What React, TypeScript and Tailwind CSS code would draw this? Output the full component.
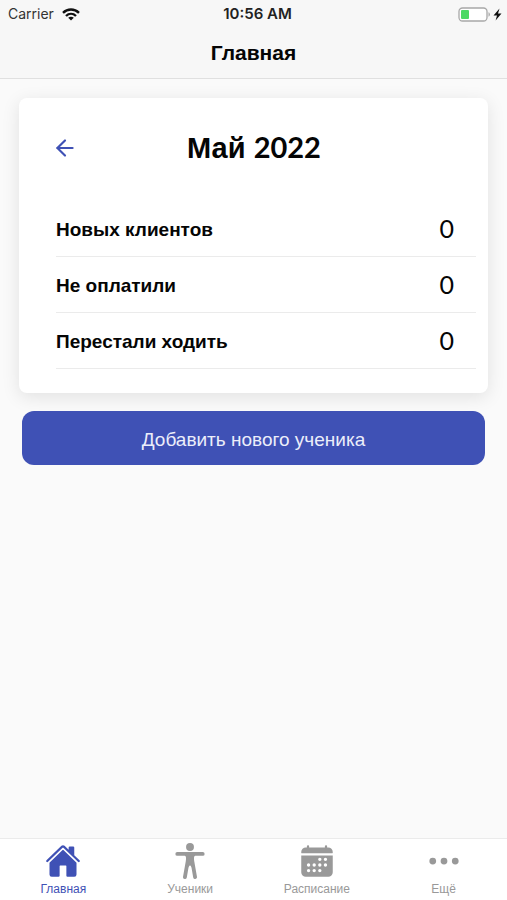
import React from 'react';
import { ArrowLeft } from 'lucide-react';
import { IoBody, IoCalendar, IoEllipsisHorizontal, IoHome } from 'react-icons/io5';

interface StatRowProps {
    label: string;
    value: number;
}

const stats: StatRowProps[] = [
    { label: 'Новых клиентов', value: 0 },
    { label: 'Не оплатили', value: 0 },
    { label: 'Перестали ходить', value: 0 },
];

const tabs = [
    { label: 'Главная', icon: IoHome, active: true },
    { label: 'Ученики', icon: IoBody, active: false },
    { label: 'Расписание', icon: IoCalendar, active: false },
    { label: 'Ещё', icon: IoEllipsisHorizontal, active: false },
];

const WifiIcon: React.FC = () => (
    <svg width="18" height="13" viewBox="0 0 18 13" fill="none" stroke="#111" strokeWidth="2.4" aria-hidden="true">
        <path d="M1 4.8C5.5.4 12.5.4 17 4.8" />
        <path d="M4 8C6.9 5.2 11.1 5.2 14 8" />
        <path d="M9 12.6L6.2 9.8C7.8 8.3 10.2 8.3 11.8 9.8Z" fill="#111" stroke="none" />
    </svg>
);

const BatteryIcon: React.FC = () => (
    <svg width="45" height="15" viewBox="0 0 45 15" aria-hidden="true">
        <rect x="1" y="1" width="28" height="13" rx="3.5" fill="#fff" stroke="#a8a8a8" strokeWidth="1.3" />
        <rect x="3" y="3" width="8" height="9" rx="1" fill="#4cd964" />
        <path d="M30.5 5.3C32.4 6 32.4 9 30.5 9.7Z" fill="#a8a8a8" />
        <path d="M41.5 1.5L35.5 8.6H39L37.6 13.5L43.5 6.4H40Z" fill="#111" />
    </svg>
);

const StatusBar: React.FC = () => (
    <div className="grid grid-cols-3 items-center h-7 pl-2 pr-1 font-[Inter,sans-serif]">
        <div className="flex items-center gap-2 text-sm text-[#333]">
            <span>Carrier</span>
            <WifiIcon />
        </div>
        <span className="pl-1 text-center text-[15px] font-semibold text-[#222]">10:56 AM</span>
        <div className="flex justify-end">
            <BatteryIcon />
        </div>
    </div>
);

const StatRow: React.FC<StatRowProps> = ({ label, value }) => (
    <div className="flex items-center justify-between h-14 pr-[22px] border-b border-[#ebebeb]">
        <dt className="pt-1 text-[19px] font-bold">{label}</dt>
        <dd className="font-[Lato,sans-serif] text-[25px]">{value}</dd>
    </div>
);

const MonthCard: React.FC = () => (
    <section className="bg-white rounded-lg pl-[37px] pr-3 pb-6 shadow-[0_4px_18px_rgba(0,0,0,0.1)]">
        <div className="grid grid-cols-[26px_1fr_50px] items-center h-[100px]">
            <button type="button" aria-label="Предыдущий месяц" className="text-[#3f51b5] -ml-1">
                <ArrowLeft size={26} />
            </button>
            <h2 className="text-center text-[29px] font-bold">
                Май <span className="font-[Lato,sans-serif]">2022</span>
            </h2>
        </div>
        <dl className="pt-[3px]">
            {stats.map(stat => (
                <StatRow key={stat.label} {...stat} />
            ))}
        </dl>
    </section>
);

const TabBar: React.FC = () => (
    <nav className="grid grid-cols-4 h-[62px] bg-white border-t border-[#ebebeb]">
        {tabs.map(({ label, icon: Icon, active }) => (
            <a
                key={label}
                href="#"
                aria-current={active ? 'page' : undefined}
                className={`flex flex-col items-center pt-1 text-xs ${active ? 'text-[#3f51b5]' : 'text-[#999]'}`}
            >
                <Icon size={36} />
                <span className="leading-5">{label}</span>
            </a>
        ))}
    </nav>
);

const App: React.FC = () => {
    return (
        <div className="flex flex-col min-h-screen bg-[#fafafa] text-[#050505] font-['Liberation_Sans',Arial,sans-serif]">
            <header className="bg-[#f7f7f7] border-b border-[#e0e0e0]">
                <StatusBar />
                <h1 className="h-[50px] text-center text-[21px] leading-[50px] font-bold">Главная</h1>
            </header>

            <main className="flex-1 px-[19px] pt-[19px]">
                <MonthCard />
                <div className="px-[3px] pt-[18px]">
                    <button type="button" className="w-full h-[54px] pt-1 rounded-xl bg-[#3f51b5] text-[#eceefa] text-[19px]">
                        Добавить нового ученика
                    </button>
                </div>
            </main>

            <TabBar />
        </div>
    );
};

export default App;
